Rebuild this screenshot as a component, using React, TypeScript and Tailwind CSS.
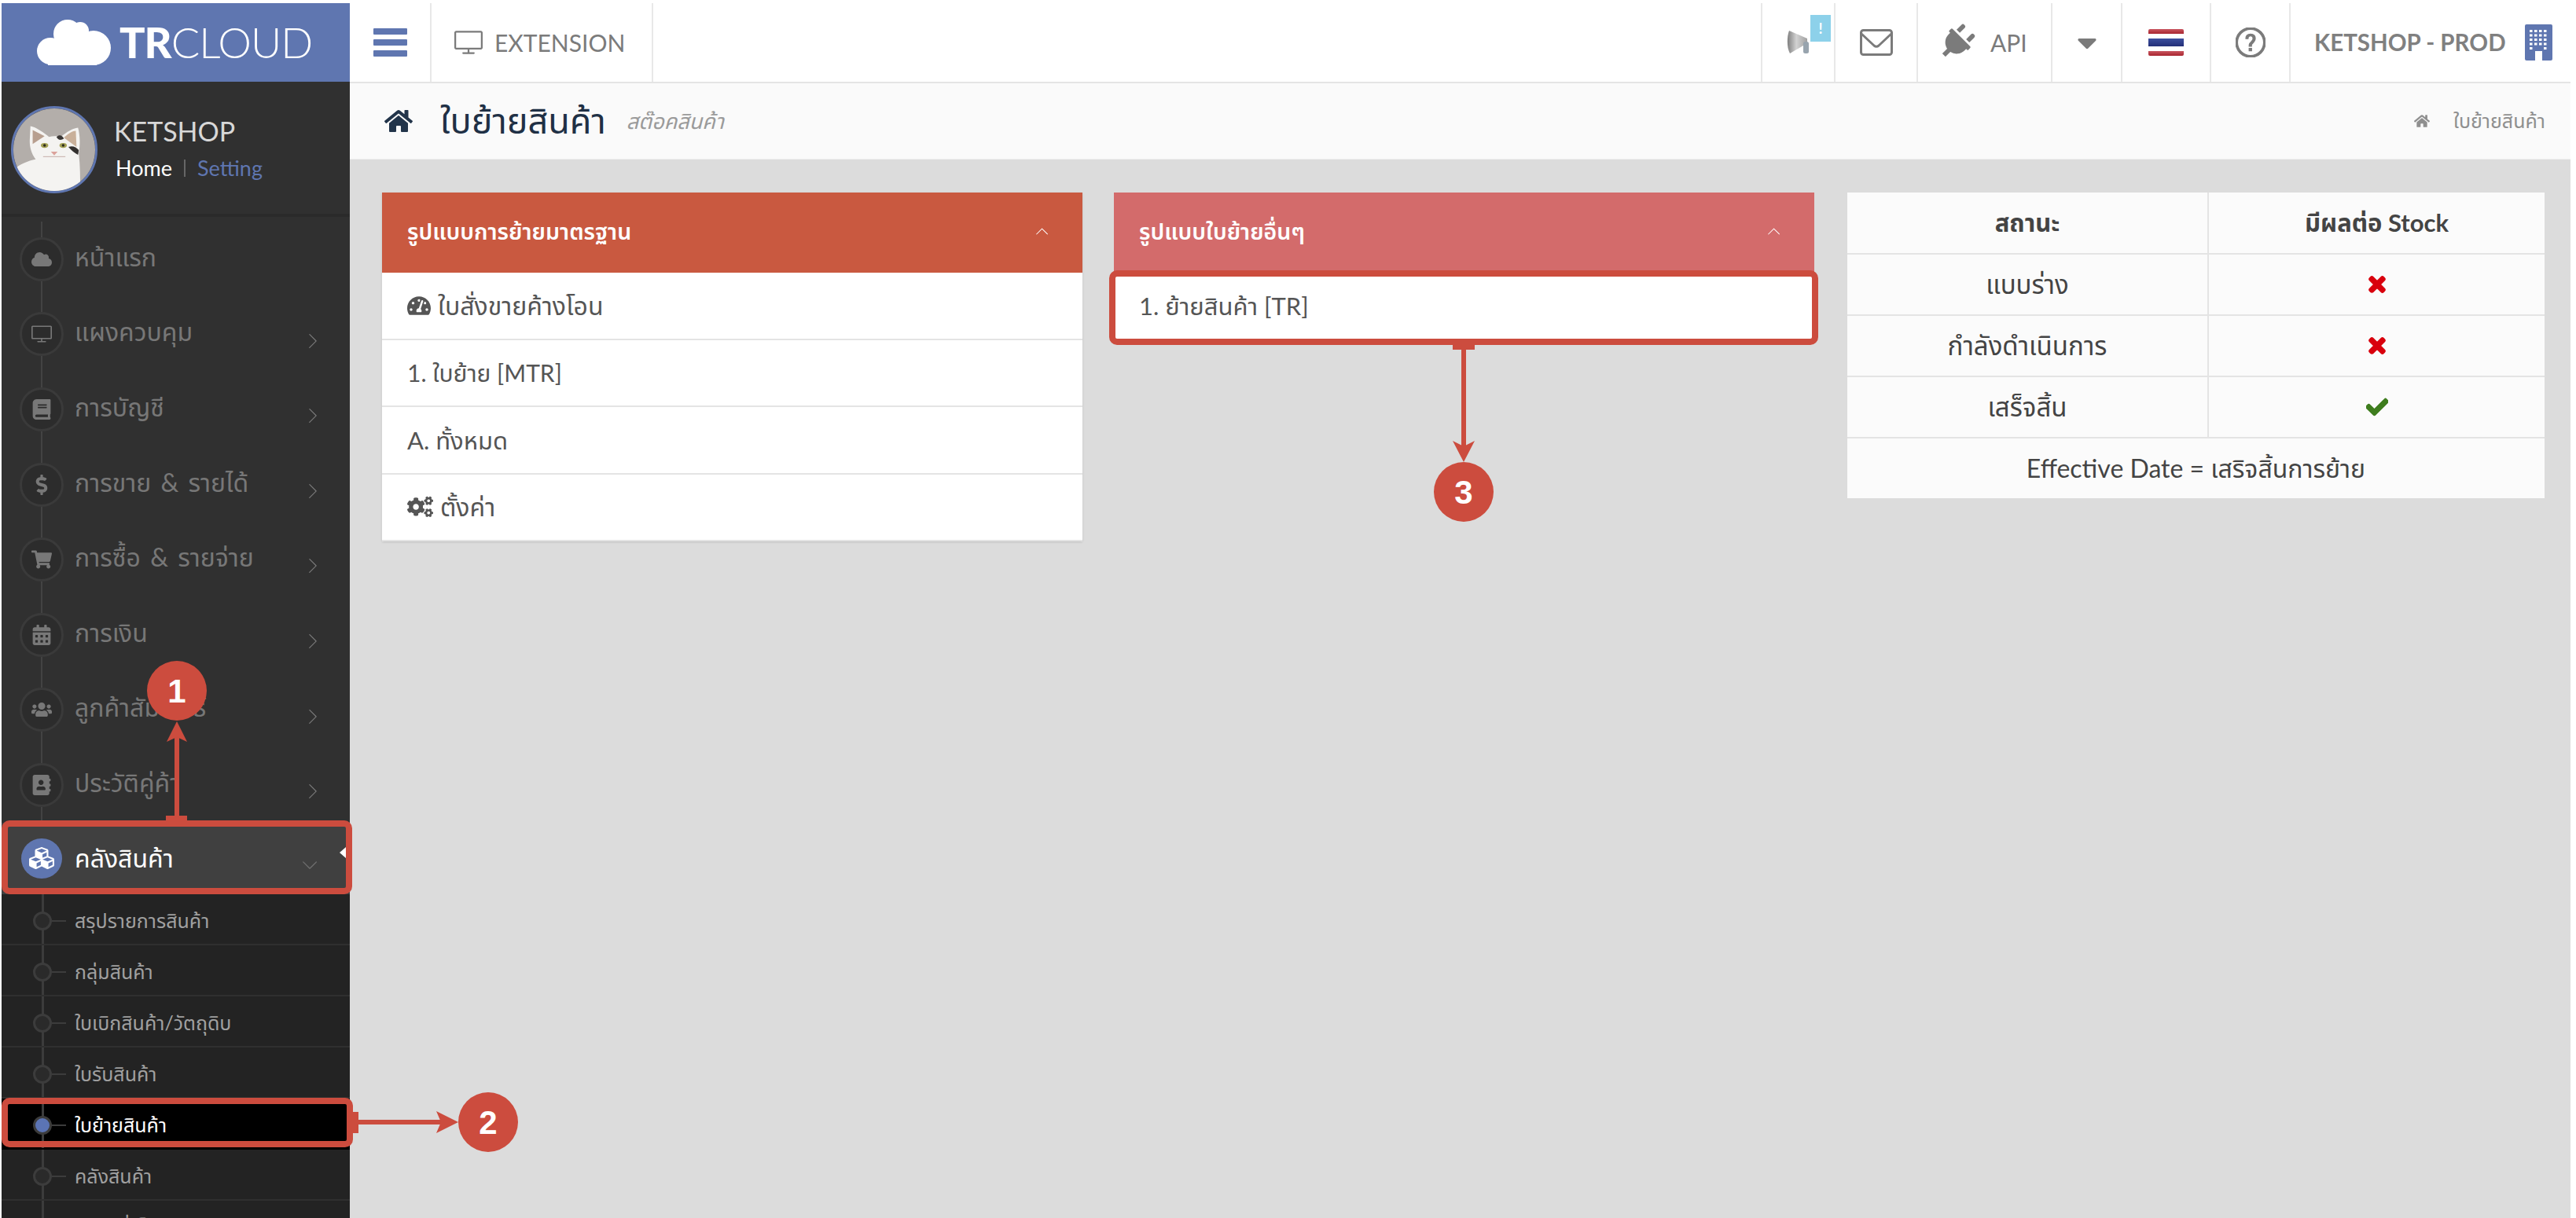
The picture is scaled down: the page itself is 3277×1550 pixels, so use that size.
import React from 'react'
import { FaCloud, FaBook, FaDollarSign, FaShoppingCart, FaCalendarAlt, FaUsers, FaAddressBook, FaCubes, FaTachometerAlt, FaCogs, FaTimes, FaCheck, FaHome, FaPlug, FaCaretDown } from 'react-icons/fa'
import { SlScreenDesktop, SlQuestion, SlArrowRight, SlArrowDown, SlArrowUp } from 'react-icons/sl'

const font = "font-['Lato','Noto_Sans_Thai','Noto_Sans',sans-serif]"

const menu = [
  { label: 'หน้าแรก', icon: <FaCloud />, more: false },
  { label: 'แผงควบคุม', icon: <SlScreenDesktop />, more: true },
  { label: 'การบัญชี', icon: <FaBook />, more: true },
  { label: 'การขาย & รายได้', icon: <FaDollarSign />, more: true },
  { label: 'การซื้อ & รายจ่าย', icon: <FaShoppingCart />, more: true },
  { label: 'การเงิน', icon: <FaCalendarAlt />, more: true },
  { label: 'ลูกค้าสัมพันธ์', icon: <FaUsers />, more: true },
  { label: 'ประวัติคู่ค้า', icon: <FaAddressBook />, more: true },
]

const subMenu = ['สรุปรายการสินค้า', 'กลุ่มสินค้า', 'ใบเบิกสินค้า/วัตถุดิบ', 'ใบรับสินค้า', 'ใบย้ายสินค้า', 'คลังสินค้า', 'สถานที่เก็บ']

function Cat() {
  return (
    <svg viewBox="0 0 110 107" preserveAspectRatio="none" className="h-full w-full">
      <rect width="110" height="107" fill="#b3aeaa" />
      <path d="M0 107 L0 80 C8 72 20 68 30 66 C24 58 22 50 22 42 L23 23 C30 24 42 32 48 37 C54 35 60 36 64 37 C72 30 80 26 87 25 C90 36 90 48 88 58 C90 75 90 90 90 107 Z" fill="#f4f3f1" />
      <path d="M26 28 L26 46 L42 36 Z" fill="#b89f8f" />
      <path d="M68 38 C74 32 80 29 84 29 L85 50 Z" fill="#c9b09a" />
      <path d="M58 37 C62 33 66 35 68 39 C64 42 60 41 58 37 Z" fill="#3a3735" />
      <path d="M74 50 C80 48 84 50 88 54 L87 60 C82 58 78 54 74 50 Z" fill="#33302e" />
      <ellipse cx="42" cy="48" rx="5" ry="3.2" fill="#a3a055" />
      <ellipse cx="67" cy="48" rx="5" ry="3.2" fill="#a3a055" />
      <circle cx="42" cy="48" r="1.8" fill="#2a2a1f" />
      <circle cx="67" cy="48" r="1.8" fill="#2a2a1f" />
      <path d="M50.5 56 L59.5 56 L55 61 Z" fill="#dba29b" />
      <path d="M40 62.5 L70 62.5" stroke="#b89a95" strokeWidth="0.8" />
    </svg>
  )
}

function LogoCloud() {
  return (
    <svg viewBox="0 0 95 58" className="h-[58px] w-[95px]" fill="#fff">
      <circle cx="39" cy="18" r="18" />
      <circle cx="55" cy="14" r="11" />
      <circle cx="17" cy="40" r="17" />
      <circle cx="72" cy="36" r="22" />
      <rect x="14" y="30" width="62" height="28" />
    </svg>
  )
}

function Horn() {
  return (
    <svg viewBox="0 0 30 30" className="h-[30px] w-[30px]">
      <defs>
        <linearGradient id="horn" x1="0" y1="0" x2="1" y2="0">
          <stop offset="0" stopColor="#7f7f7f" />
          <stop offset="0.45" stopColor="#d2d2d2" />
          <stop offset="1" stopColor="#a0a0a0" />
        </linearGradient>
      </defs>
      <path d="M3 0 C0 8 0 22 4 29 L26 16 L26 10 Z" fill="url(#horn)" />
      <rect x="21" y="14" width="7" height="15" rx="2.5" fill="#98a4ae" />
    </svg>
  )
}

function Building() {
  return (
    <svg viewBox="0 0 35 46" className="h-[46px] w-[35px]">
      <rect width="35" height="46" rx="2" fill="#5f76b0" />
      {[7, 12.5, 18, 23.5].map((y) =>
        [6, 12, 18, 24].map((x) => <rect key={`${x}-${y}`} x={x} y={y} width="3.5" height="3" fill="#fff" />),
      )}
      <rect x="6" y="29" width="3.5" height="3" fill="#fff" />
      <rect x="24" y="29" width="3.5" height="3" fill="#fff" />
      <rect x="13" y="34" width="9" height="12" fill="#fff" />
    </svg>
  )
}

export default function App() {
  return (
    <div className={`relative h-[1550px] w-[3277px] overflow-hidden bg-white ${font}`}>
      <div className="flex h-full pl-[2px] pr-[7px] pt-[4px]">
        {/* Sidebar */}
        <aside className="flex w-[443px] shrink-0 flex-col bg-[#303030]">
          <div className="flex h-[100px] shrink-0 items-center bg-[#5f76b0] pl-[45px] text-white">
            <LogoCloud />
            <span className="ml-[10px] text-[54px] leading-none tracking-[-1px]"><b className="font-black">TR</b><span className="font-light">CLOUD</span></span>
          </div>
          <div className="flex h-[172px] shrink-0 border-b-[4px] border-[#2a2a2a] pl-[12px] pt-[31px]">
            <div className="h-[111px] w-[110px] shrink-0 overflow-hidden rounded-full border-[3px] border-[#5f76b0]"><Cat /></div>
            <div className="ml-[21px] pt-[12px]">
              <div className="text-[34px] leading-[40px] text-[#d8d8d8]">KETSHOP</div>
              <div className="ml-[2px] mt-[12px] flex items-center text-[27px] leading-[30px]">
                <span className="text-white">Home</span>
                <span className="mx-[15px] h-[22px] w-[2px] bg-[#666]" />
                <span className="text-[#5f76b0]">Setting</span>
              </div>
            </div>
          </div>
          <nav className="pt-[6px]">
            {menu.map((m) => (
              <div key={m.label} className="relative flex h-[95.6px] items-center">
                <div className="absolute bottom-0 left-[50px] top-0 w-[2px] bg-[#434343]" />
                <div className="relative ml-[23px] flex h-[56px] w-[56px] shrink-0 items-center justify-center rounded-full border-[3px] border-[#3a3a3a] bg-[#2c2c2c] text-[26px] text-[#787878]">{m.icon}</div>
                <span className="ml-[14px] pb-[6px] text-[32px] leading-none text-[#777] [word-spacing:4px]">{m.label}</span>
                {m.more && <SlArrowRight className="absolute left-[387px] top-[47px] h-[18px] w-[18px] text-[#7a7a7a]" />}
              </div>
            ))}
            <div className="relative flex h-[91px] items-center bg-[#404040]">
              <div className="ml-[25px] flex h-[51px] w-[52px] items-center justify-center rounded-full bg-[#5f76b0] text-[32px] text-white"><FaCubes /></div>
              <span className="ml-[16px] text-[32px] leading-none text-white">คลังสินค้า</span>
              <SlArrowDown className="absolute left-[383px] top-[45px] h-[18px] w-[18px] text-[#6f6f6f]" />
              <div className="absolute right-[5px] top-[31px] h-0 w-0 border-y-[7px] border-r-[8px] border-y-transparent border-r-white" />
            </div>
            <div className="bg-[#232323]">
              {subMenu.map((s, i) => (
                <div key={s} className={`relative flex h-[65px] items-center border-b-[2px] pt-[6px] ${i === 4 ? 'border-black bg-black' : 'border-[#2f2f2f]'}`}>
                  <div className="absolute bottom-0 left-[51px] top-0 w-[3px] bg-[#3c3c3c]" />
                  <div className={`relative ml-[40px] h-[24px] w-[24px] rounded-full border-[3px] border-[#3c3c3c] ${i === 4 ? 'bg-[#5b74b5]' : 'bg-[#2a2a2a]'}`} />
                  <div className="h-[2px] w-[18px] bg-[#3c3c3c]" />
                  <span className={`ml-[11px] pb-[2px] text-[25px] leading-none ${i === 4 ? 'text-white' : 'text-[#a0a0a0]'}`}>{s}</span>
                </div>
              ))}
            </div>
          </nav>
        </aside>

        {/* Main */}
        <main className="flex min-w-0 flex-1 flex-col bg-[#dcdcdc]">
          <header className="flex h-[102px] shrink-0 items-stretch border-b-[2px] border-[#e4e4e4] bg-white text-[#7b7b7b]">
            <div className="flex w-[104px] items-center justify-center border-r-[2px] border-[#e8e8e8]">
              <div className="flex h-[36px] w-[43px] flex-col justify-between">
                <div className="h-[8px] rounded-[1px] bg-[#5f76b0]" />
                <div className="h-[8px] rounded-[1px] bg-[#5f76b0]" />
                <div className="h-[8px] rounded-[1px] bg-[#5f76b0]" />
              </div>
            </div>
            <div className="flex w-[282px] items-center border-r-[2px] border-[#e8e8e8] pl-[29px] text-[30px]">
              <SlScreenDesktop className="h-[36px] w-[36px]" />
              <span className="ml-[15px]">EXTENSION</span>
            </div>
            <div className="flex-1" />
            <div className="relative flex w-[93px] items-center border-l-[2px] border-[#e8e8e8] pl-[31px]">
              <Horn />
              <div className="absolute left-[61px] top-[15px] flex h-[34px] w-[26px] items-center justify-center bg-[#8dd1ea] text-[18px] font-bold text-white">!</div>
            </div>
            <div className="flex w-[105px] items-center justify-center border-l-[2px] border-[#e8e8e8]">
              <svg viewBox="0 0 42 34" className="h-[34px] w-[42px]" fill="none" stroke="currentColor" strokeWidth="3">
                <rect x="1.5" y="1.5" width="39" height="31" rx="3" />
                <path d="M2 6 L18 21 Q21 23.5 24 21 L40 6" />
              </svg>
            </div>
            <div className="flex w-[171px] items-center border-l-[2px] border-[#e8e8e8] pl-[26px] text-[30px]">
              <FaPlug className="h-[46px] w-[46px] rotate-45" />
              <span className="ml-[20px]">API</span>
            </div>
            <div className="flex w-[89px] items-center justify-center border-l-[2px] border-[#e8e8e8]"><FaCaretDown className="h-[40px] w-[40px]" /></div>
            <div className="flex w-[113px] items-center justify-center border-l-[2px] border-[#e8e8e8]">
              <div className="flex h-[34px] w-[45px] flex-col overflow-hidden rounded-[2px]">
                <div className="h-[6px] bg-linear-to-b from-[#c95560] to-[#a8222e]" />
                <div className="h-[6px] bg-white" />
                <div className="h-[10px] bg-linear-to-b from-[#3d4f9e] to-[#232f78]" />
                <div className="h-[6px] bg-white" />
                <div className="h-[6px] bg-linear-to-b from-[#c95560] to-[#a8222e]" />
              </div>
            </div>
            <div className="flex w-[101px] items-center justify-center border-l-[2px] border-[#e8e8e8]"><SlQuestion className="h-[38px] w-[38px]" stroke="currentColor" strokeWidth={36} /></div>
            <div className="flex w-[358px] items-center border-l-[2px] border-[#e8e8e8] pl-[30px]">
              <span className="text-[29.5px] font-bold text-[#808080]">KETSHOP - PROD</span>
              <div className="ml-[24px]"><Building /></div>
            </div>
          </header>
          <div className="flex h-[97px] shrink-0 items-center border-b-[1px] border-[#eeeeee] bg-[#fafafa] pl-[42px] pr-[32px]">
            <FaHome className="h-[32px] w-[40px] text-[#22344a]" />
            <span className="ml-[33px] text-[45px] text-[#1f3045]">ใบย้ายสินค้า</span>
            <span className="ml-[26px] text-[27px] italic text-[#9a9a9a]">สต๊อคสินค้า</span>
            <div className="flex-1" />
            <FaHome className="h-[18px] w-[20px] text-[#8f8f8f]" />
            <span className="ml-[30px] text-[25px] text-[#8f8f8f]">ใบย้ายสินค้า</span>
          </div>
          <div className="flex items-start pl-[41px] pt-[42px]">
            <section className="w-[891px] shadow-sm">
              <div className="flex h-[102px] items-center bg-[#c95940] px-[32px] pb-[4px] text-[28.5px] font-semibold text-white">
                <span className="flex-1">รูปแบบการย้ายมาตรฐาน</span>
                <SlArrowUp className="mr-[12px] h-[15px] w-[15px]" />
              </div>
              {[
                <><FaTachometerAlt className="mr-[9px] inline h-[28px] w-[30px]" /><span className="text-[32px]">ใบสั่งขายค้างโอน</span></>,
                '1. ใบย้าย [MTR]',
                <span className="text-[31px]">A. ทั้งหมด</span>,
                <><FaCogs className="mr-[9px] inline h-[28px] w-[33px]" /><span className="text-[32px]">ตั้งค่า</span></>,
              ].map((t, i) => (
                <div key={i} className="flex h-[85.5px] items-center border-b-[2px] border-[#e4e4e4] bg-white px-[32px] text-[30px] text-[#555]">{t}</div>
              ))}
            </section>
            <section className="ml-[40px] w-[891px]">
              <div className="flex h-[102px] items-center bg-[#d36b6b] px-[32px] pb-[4px] text-[28.5px] font-semibold text-white">
                <span className="flex-1">รูปแบบใบย้ายอื่นๆ</span>
                <SlArrowUp className="mr-[12px] h-[15px] w-[15px]" />
              </div>
              <div className="flex h-[85px] items-center bg-white px-[32px] text-[31px] text-[#555]">1. ย้ายสินค้า [TR]</div>
            </section>
            <table className="ml-[42px] w-[887px] border-collapse bg-[#fbfbfb] text-center text-[33px] text-[#444]">
              <tbody>
                <tr className="h-[78px] border-b-[2px] border-[#e4e4e4]">
                  <th className="w-[459px] border-r-[2px] border-[#e4e4e4] text-[31px] font-bold">สถานะ</th>
                  <th className="text-[31px] font-bold">มีผลต่อ Stock</th>
                </tr>
                <tr className="h-[78px] border-b-[2px] border-[#e4e4e4]">
                  <td className="border-r-[2px] border-[#e4e4e4]">แบบร่าง</td>
                  <td><FaTimes className="mx-auto h-[28px] w-[28px] text-[#d9000d]" stroke="currentColor" strokeWidth={40} /></td>
                </tr>
                <tr className="h-[78px] border-b-[2px] border-[#e4e4e4]">
                  <td className="border-r-[2px] border-[#e4e4e4]">กำลังดำเนินการ</td>
                  <td><FaTimes className="mx-auto h-[28px] w-[28px] text-[#d9000d]" stroke="currentColor" strokeWidth={40} /></td>
                </tr>
                <tr className="h-[78px] border-b-[2px] border-[#e4e4e4]">
                  <td className="border-r-[2px] border-[#e4e4e4]">เสร็จสิ้น</td>
                  <td><FaCheck className="mx-auto h-[28px] w-[28px] text-[#3f7d1e]" stroke="currentColor" strokeWidth={30} /></td>
                </tr>
                <tr className="h-[77px]">
                  <td colSpan={2} className="text-[32px]">Effective Date = เสริจสิ้นการย้าย</td>
                </tr>
              </tbody>
            </table>
          </div>
        </main>
      </div>

      {/* Annotations */}
      <div className="absolute left-[2px] top-[1044px] h-[94px] w-[446px] rounded-[10px] border-[8px] border-[#cc4c3e]" />
      <div className="absolute left-[2px] top-[1397px] h-[63px] w-[447px] rounded-[10px] border-[8px] border-[#cc4c3e]" />
      <div className="absolute left-[1411px] top-[344px] h-[95px] w-[902px] rounded-[10px] border-[8px] border-[#cc4c3e]" />
      <svg className="absolute left-0 top-0" width="3277" height="1550" fill="#cc4c3e">
        <rect x="211" y="1038" width="27" height="6" />
        <rect x="222" y="930" width="6" height="108" />
        <path d="M225 918 L238 944 L225 938 L212 944 Z" />
        <rect x="449" y="1415" width="7" height="27" />
        <rect x="456" y="1425" width="110" height="6" />
        <path d="M583 1428 L555 1414 L561 1428 L555 1442 Z" />
        <rect x="1848" y="439" width="28" height="6" />
        <rect x="1859" y="445" width="6" height="130" />
        <path d="M1862 588 L1848 561 L1862 568 L1876 561 Z" />
      </svg>
      {[
        { n: '1', c: 'left-[187px] top-[841px]' },
        { n: '2', c: 'left-[583px] top-[1390px]' },
        { n: '3', c: 'left-[1824px] top-[588px]' },
      ].map((b) => (
        <div key={b.n} className={`absolute flex h-[76px] w-[76px] items-center justify-center rounded-full bg-[#cc4c3e] font-['Liberation_Sans',sans-serif] text-[42px] font-bold text-white ${b.c}`}>{b.n}</div>
      ))}
    </div>
  )
}
